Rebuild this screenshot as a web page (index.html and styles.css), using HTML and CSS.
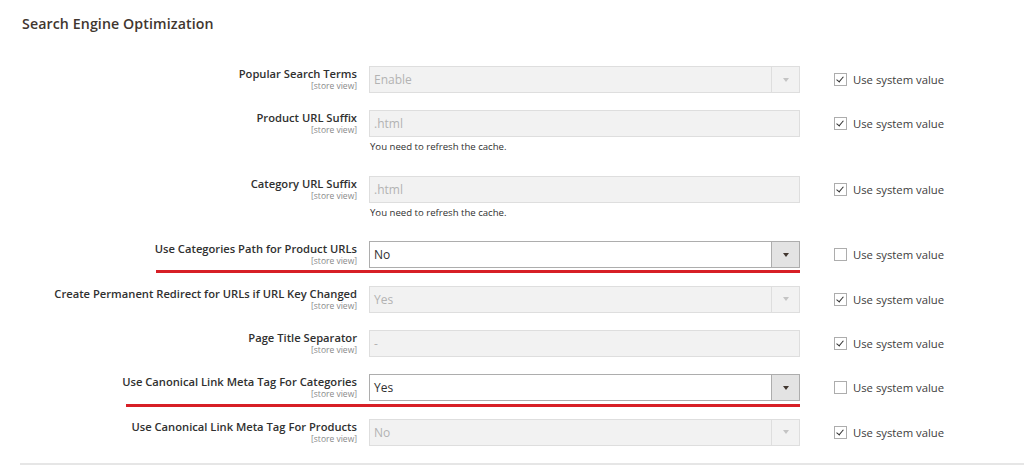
FILE: index.html
```html
<!DOCTYPE html>
<html>
<head>
<meta charset="utf-8">
<link rel="stylesheet" href="styles.css">
</head>
<body>
<section class="section">
  <h2 class="title">Search Engine Optimization</h2>
  <div class="form">
    <div class="row">
      <div class="label"><span class="name">Popular Search Terms</span><span class="scope">[store view]</span></div>
      <div class="control">
        <div class="field disabled select"><span class="val">Enable</span><span class="arrow"></span></div>
      </div>
      <label class="sys"><span class="cb checked"></span>Use system value</label>
    </div>
    <div class="row">
      <div class="label"><span class="name">Product URL Suffix</span><span class="scope">[store view]</span></div>
      <div class="control">
        <div class="field disabled"><span class="val">.html</span></div>
        <div class="note">You need to refresh the cache.</div>
      </div>
      <label class="sys"><span class="cb checked"></span>Use system value</label>
    </div>
    <div class="row">
      <div class="label"><span class="name">Category URL Suffix</span><span class="scope">[store view]</span></div>
      <div class="control">
        <div class="field disabled"><span class="val">.html</span></div>
        <div class="note">You need to refresh the cache.</div>
      </div>
      <label class="sys"><span class="cb checked"></span>Use system value</label>
    </div>
    <div class="row">
      <div class="label"><span class="name">Use Categories Path for Product URLs</span><span class="scope">[store view]</span></div>
      <div class="control">
        <div class="field select"><span class="val">No</span><span class="arrow"></span></div>
      </div>
      <label class="sys"><span class="cb"></span>Use system value</label>
      <div class="mark mark-a"></div>
    </div>
    <div class="row">
      <div class="label"><span class="name">Create Permanent Redirect for URLs if URL Key Changed</span><span class="scope">[store view]</span></div>
      <div class="control">
        <div class="field disabled select"><span class="val">Yes</span><span class="arrow"></span></div>
      </div>
      <label class="sys"><span class="cb checked"></span>Use system value</label>
    </div>
    <div class="row">
      <div class="label"><span class="name">Page Title Separator</span><span class="scope">[store view]</span></div>
      <div class="control">
        <div class="field disabled"><span class="val">-</span></div>
      </div>
      <label class="sys"><span class="cb checked"></span>Use system value</label>
    </div>
    <div class="row">
      <div class="label"><span class="name">Use Canonical Link Meta Tag For Categories</span><span class="scope">[store view]</span></div>
      <div class="control">
        <div class="field select"><span class="val">Yes</span><span class="arrow"></span></div>
      </div>
      <label class="sys"><span class="cb"></span>Use system value</label>
      <div class="mark mark-b"></div>
    </div>
    <div class="row">
      <div class="label"><span class="name">Use Canonical Link Meta Tag For Products</span><span class="scope">[store view]</span></div>
      <div class="control">
        <div class="field disabled select"><span class="val">No</span><span class="arrow"></span></div>
      </div>
      <label class="sys"><span class="cb checked"></span>Use system value</label>
    </div>
  </div>
  <div class="rule"></div>
</section>
</body>
</html>
```
FILE: styles.css
```css
html, body {
  margin: 0;
  padding: 0;
  background: #fff;
  font-family: "Open Sans", "Noto Sans", sans-serif;
  color: #303030;
}
.section {
  width: 1024px;
  height: 468px;
  overflow: hidden;
}
.title {
  margin: 0;
  padding: 14px 0 0 22px;
  font-size: 14.2px;
  line-height: 20px;
  font-weight: 600;
  color: #41362f;
  letter-spacing: 0.1px;
}
.form {
  padding-top: 32px;
}
.row {
  position: relative;
  display: grid;
  grid-template-columns: 357px 431px auto;
  column-gap: 12px;
  align-items: start;
  margin-bottom: 17.4px;
}
.label {
  display: flex;
  flex-direction: column;
  align-items: flex-end;
  text-align: right;
  padding-top: 1px;
}
.name {
  font-size: 11.2px;
  line-height: 13px;
  font-weight: 600;
  color: #303030;
}
.scope {
  font-size: 8.5px;
  line-height: 11px;
  color: #8a8a8a;
}
.field {
  box-sizing: border-box;
  height: 27px;
  border: 1px solid #adadad;
  background: #fff;
  display: flex;
  align-items: center;
}
.field.disabled {
  background: #f2f2f2;
  border-color: #dedede;
}
.val {
  flex: 1;
  padding-left: 4px;
  font-size: 12px;
  color: #303030;
}
.field.disabled .val {
  color: #b3b3b3;
}
.arrow {
  width: 27px;
  align-self: stretch;
  background: #e3e3e3;
  border-left: 1px solid #adadad;
  position: relative;
}
.arrow::after {
  content: "";
  position: absolute;
  left: 50%;
  top: 50%;
  margin-left: -3px;
  margin-top: -2px;
  border-left: 3.5px solid transparent;
  border-right: 3.5px solid transparent;
  border-top: 4px solid #41362f;
}
.field.disabled .arrow {
  background: #f2f2f2;
  border-left-color: #dedede;
}
.field.disabled .arrow::after {
  border-top-color: #c4c4c4;
}
.note {
  font-size: 9.6px;
  line-height: 12px;
  padding: 4px 0 5px 1px;
  color: #303030;
}
.sys {
  display: flex;
  align-items: center;
  height: 27px;
  padding-left: 22px;
  font-size: 11.3px;
  color: #404040;
}
.cb {
  box-sizing: border-box;
  width: 13px;
  height: 13px;
  border: 1px solid #adadad;
  background: #fff;
  margin-right: 6px;
  position: relative;
}
.cb.checked::after {
  content: "";
  position: absolute;
  left: 3px;
  top: 1px;
  width: 3px;
  height: 6px;
  border-right: 1.5px solid #303030;
  border-bottom: 1.5px solid #303030;
  transform: rotate(40deg);
}
.mark {
  position: absolute;
  top: 29px;
  height: 3px;
  background: #d71f26;
  right: calc(100% - 800px);
}
.mark-a { left: 156px; }
.mark-b { left: 126px; top: 30px; }
.rule {
  margin: 3px 0 0 20px;
  height: 2px;
  background: #e6e6e6;
}
```
